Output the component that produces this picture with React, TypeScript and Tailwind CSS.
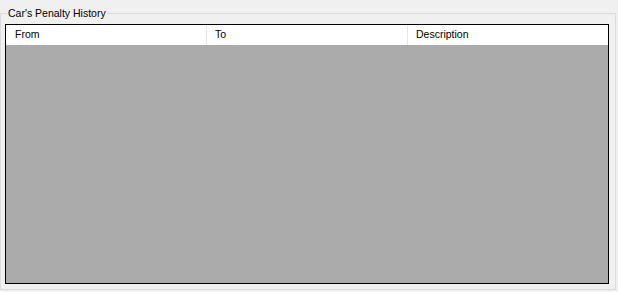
import React from 'react';

const columns = ['From', 'To', 'Description'];

const App: React.FC = () => {
  return (
    <div
      className="w-[618px] h-[292px] bg-[#f0f0f0] pt-[13px] pr-[2px] pb-[2px]"
      style={{ fontFamily: "'Liberation Sans', Arial, sans-serif" }}
    >
      {/* group box */}
      <div className="relative h-full border border-[#dcdcdc] pt-[10px] pl-[4px] pr-[6px] pb-[5px]">
        <div className="absolute left-[6px] -top-[9px] px-[1px] bg-[#f0f0f0] text-[10.5px] leading-[16px] text-black">
          Car's Penalty History
        </div>

        {/* grid */}
        <div className="h-full border border-black bg-[#ababab] flex flex-col">
          <div className="flex h-[20px] bg-white">
            {columns.map((c, i) => (
              <div
                key={c}
                className={`flex items-center text-[10.5px] text-black ${i === 0 ? 'pl-[9px]' : 'pl-[8px]'} ${i < 2 ? 'w-[201px] border-r border-[#e5e5e5]' : 'flex-1'}`}
              >
                {c}
              </div>
            ))}
          </div>
        </div>
      </div>
    </div>
  );
};

export default App;
